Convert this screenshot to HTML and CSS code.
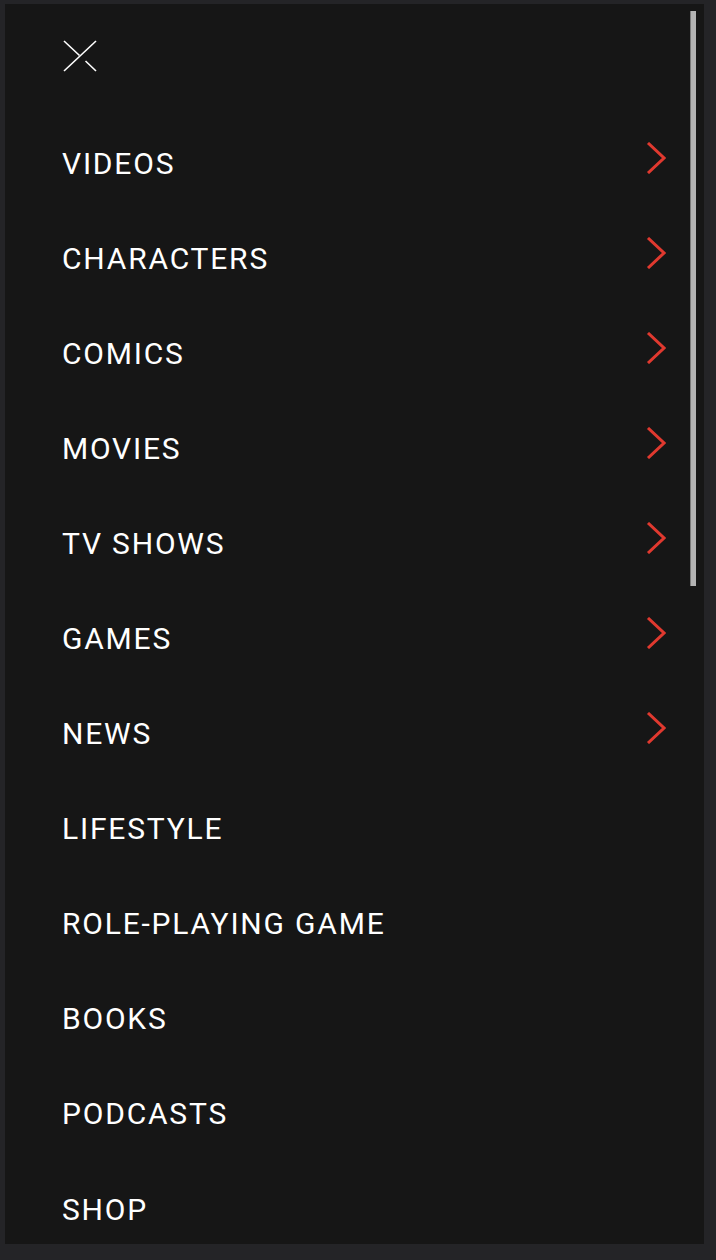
FILE: index.html
```html
<!DOCTYPE html>
<html lang="en">
<head>
<meta charset="utf-8">
<title>Menu</title>
<link rel="stylesheet" href="styles.css">
</head>
<body>
<div class="panel">
  <div class="scroll-thumb"></div>
  <div class="top">
    <button class="close" aria-label="Close">
      <svg width="34" height="32" viewBox="0 0 34 32">
        <line x1="33" y1="1" x2="1" y2="31" stroke="#fff" stroke-width="1.6"/>
        <line x1="1" y1="1" x2="16.5" y2="15.5" stroke="#fff" stroke-width="1.6"/>
        <line x1="22.5" y1="21" x2="33" y2="31" stroke="#fff" stroke-width="1.6"/>
      </svg>
    </button>
  </div>
  <nav class="menu">
    <a class="item">VIDEOS<svg class="chev" width="20" height="32" viewBox="0 0 20 32"><polyline points="2,1 18,16 2,31" fill="none" stroke="#e0392f" stroke-width="3"/></svg></a>
    <a class="item">CHARACTERS<svg class="chev" width="20" height="32" viewBox="0 0 20 32"><polyline points="2,1 18,16 2,31" fill="none" stroke="#e0392f" stroke-width="3"/></svg></a>
    <a class="item">COMICS<svg class="chev" width="20" height="32" viewBox="0 0 20 32"><polyline points="2,1 18,16 2,31" fill="none" stroke="#e0392f" stroke-width="3"/></svg></a>
    <a class="item">MOVIES<svg class="chev" width="20" height="32" viewBox="0 0 20 32"><polyline points="2,1 18,16 2,31" fill="none" stroke="#e0392f" stroke-width="3"/></svg></a>
    <a class="item">TV SHOWS<svg class="chev" width="20" height="32" viewBox="0 0 20 32"><polyline points="2,1 18,16 2,31" fill="none" stroke="#e0392f" stroke-width="3"/></svg></a>
    <a class="item">GAMES<svg class="chev" width="20" height="32" viewBox="0 0 20 32"><polyline points="2,1 18,16 2,31" fill="none" stroke="#e0392f" stroke-width="3"/></svg></a>
    <a class="item">NEWS<svg class="chev" width="20" height="32" viewBox="0 0 20 32"><polyline points="2,1 18,16 2,31" fill="none" stroke="#e0392f" stroke-width="3"/></svg></a>
    <a class="item">LIFESTYLE</a>
    <a class="item">ROLE-PLAYING GAME</a>
    <a class="item">BOOKS</a>
    <a class="item">PODCASTS</a>
    <a class="item">SHOP</a>
  </nav>
</div>
</body>
</html>
```
FILE: styles.css
```css
html, body {
  margin: 0;
  padding: 0;
  background: #242427;
}
body {
  width: 716px;
  height: 1260px;
  overflow: hidden;
  font-family: Roboto, "Liberation Sans", sans-serif;
}
.panel {
  position: relative;
  margin: 4px 12px 0 5px;
  width: 699px;
  height: 1240px;
  background: #161616;
  overflow: hidden;
}
.scroll-thumb {
  position: absolute;
  left: 685px;
  top: 7px;
  width: 6px;
  height: 575px;
  background: #b3b3b3;
  border-left: 1px solid #7a7a7a;
  box-sizing: border-box;
}
.top {
  height: 112px;
  padding: 36px 0 0 58px;
  box-sizing: border-box;
}
.close {
  background: none;
  border: 0;
  padding: 0;
  margin: 0;
  display: block;
  cursor: pointer;
}
.close svg {
  display: block;
}
.menu {
  display: flex;
  flex-direction: column;
  padding: 0 38px 0 57px;
}
.item {
  height: 95.1px;
  display: flex;
  align-items: center;
  justify-content: space-between;
  color: #ffffff;
  font-size: 30px;
  font-weight: 400;
  letter-spacing: 1.8px;
  line-height: 1;
  text-decoration: none;
}
.chev {
  display: block;
  margin-bottom: 12px;
  flex: none;
}
```
